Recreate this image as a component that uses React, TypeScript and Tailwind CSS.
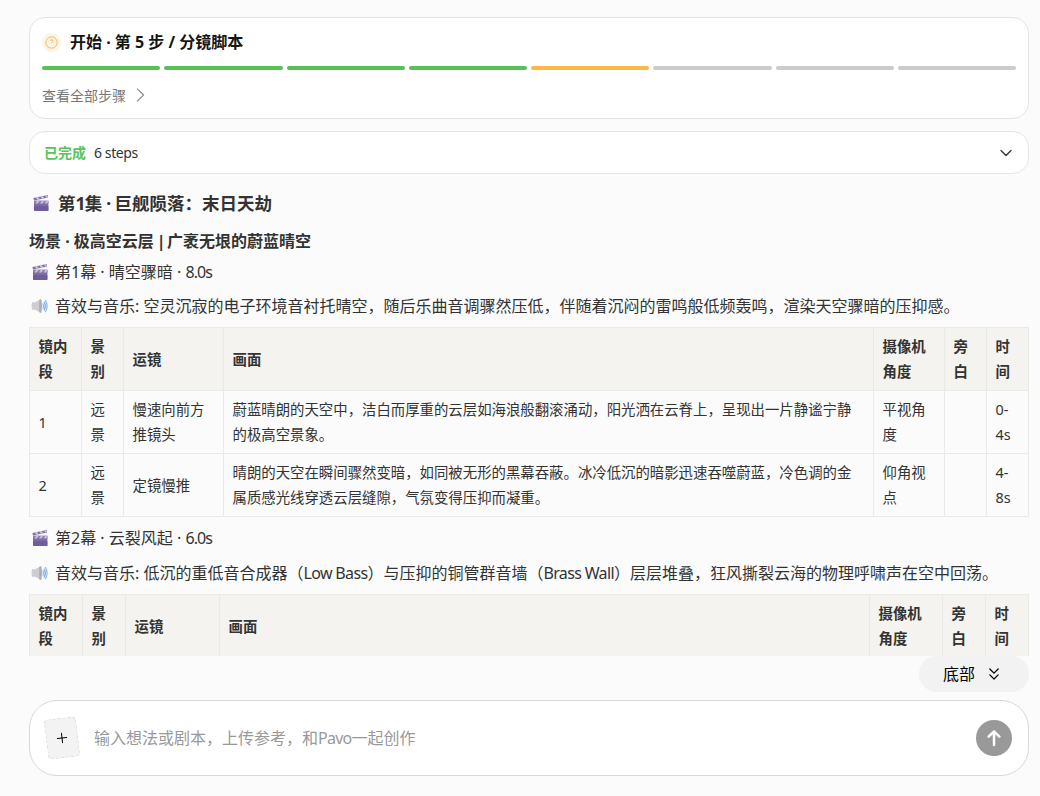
import { ChevronDown, ChevronsDown, Plus } from 'lucide-react';

const STEPS = ['done', 'done', 'done', 'done', 'active', 'todo', 'todo', 'todo'];

const STEP_COLORS: Record<string, string> = {
  done: 'bg-[#56c156]',
  active: 'bg-[#f9b949]',
  todo: 'bg-[#cbcbcb]',
};

const HEADERS = ['镜内段', '景别', '运镜', '画面', '摄像机角度', '旁白', '时间'];

const ROWS = [
  ['1', '远景', '慢速向前方推镜头', '蔚蓝晴朗的天空中，洁白而厚重的云层如海浪般翻滚涌动，阳光洒在云脊上，呈现出一片静谧宁静的极高空景象。', '平视角度', '', '0-4s'],
  ['2', '远景', '定镜慢推', '晴朗的天空在瞬间骤然变暗，如同被无形的黑幕吞蔽。冰冷低沉的暗影迅速吞噬蔚蓝，冷色调的金属质感光线穿透云层缝隙，气氛变得压抑而凝重。', '仰角视点', '', '4-8s'],
];

function ClapperIcon() {
  return (
    <svg width="18" height="18" viewBox="0 0 18 18" className="shrink-0">
      <rect x="2" y="6.8" width="14.4" height="10.2" rx="0.8" fill="#7d6ba8" />
      <rect x="2" y="12" width="14.4" height="5" rx="0.8" fill="#6f5d9b" />
      <path d="M2 6.8h14.4v2.6H2z" fill="#8f80b6" />
      <path d="M3.6 9.4l1.6-2.6h2.3L5.9 9.4zM8.2 9.4l1.6-2.6h2.3l-1.6 2.6zM12.8 9.4l1.6-2.6h2l-1.2 2.6z" fill="#c9c0de" />
      <path d="M1.4 4L15.6 1l.6 2.5L2 6.5z" fill="#8171ab" />
      <path d="M3.6 3.5l2.2-.5 2 2.3-2.3.5zM8.2 2.6l2.2-.5 2 2.2-2.3.5zM12.7 1.6l2-.4 1.4 2.2-1.4.4z" fill="#cfc7e1" />
    </svg>
  );
}

function SpeakerIcon() {
  return (
    <svg width="18" height="16" viewBox="0 0 18 16" className="shrink-0">
      <path d="M2 4.2h3.2L11 1v14l-5.8-3.2H2Q1 8 2 4.2z" fill="#cdcdd2" />
      <path d="M9.2 2Q10.9.3 11.5 2q1 6 0 12-.6 1.7-2.3 0z" fill="#adacb9" />
      <path d="M13 6q1.1 2.1 0 4.2" fill="none" stroke="#86b3e8" strokeWidth="1.2" strokeLinecap="round" />
      <path d="M14.2 4.2q2.2 3.9 0 7.8" fill="none" stroke="#72a8e6" strokeWidth="1.3" strokeLinecap="round" />
      <path d="M15.4 2.4q3.4 5.6 0 11.4" fill="none" stroke="#8bb9ec" strokeWidth="1.2" strokeLinecap="round" />
    </svg>
  );
}

function ShotTable({ cols, rows }: { cols: number[]; rows: string[][] }) {
  return (
    <table className="w-[999px] table-fixed border-collapse text-[14.4px] leading-[25px]">
      <colgroup>
        {cols.map((width, i) => (
          <col key={i} style={{ width }} />
        ))}
      </colgroup>
      <thead>
        <tr className="bg-[#f4f3ef]">
          {HEADERS.map((label) => (
            <th key={label} className="h-[63px] border border-[#e9e9e6] py-[6px] pr-2 pl-[8.5px] text-left font-bold">
              {label}
            </th>
          ))}
        </tr>
      </thead>
      <tbody>
        {rows.map((row) => (
          <tr key={row[0]}>
            {row.map((cell, i) => (
              <td key={i} className="h-[63px] border border-[#e9e9e6] py-[6px] pr-2 pl-[8.5px]">
                {cell}
              </td>
            ))}
          </tr>
        ))}
      </tbody>
    </table>
  );
}

export default function App() {
  return (
    <div className="flex h-[796px] w-[1040px] flex-col overflow-hidden bg-[#fbfbfb] pt-[17px] pr-[11px] pl-[29px] font-['Noto_Sans','Noto_Sans_CJK_SC',sans-serif] text-[#333]">
      {/* Progress */}
      <section className="h-[102px] shrink-0 rounded-2xl border border-[#e2e5e7] bg-white px-3 pt-3">
        <div className="flex h-6 items-center gap-[9px]">
          <span className="flex size-[19px] items-center justify-center rounded-full bg-[#fef4e4]">
            <svg width="13" height="13" viewBox="0 0 13 13" fill="none" stroke="#f3b65a">
              <circle cx="6.5" cy="6.5" r="5.7" />
              <path d="M5.3 4.2q1.5-1 2.6 0 .6 1.3-1.1 2.5" strokeLinecap="round" />
            </svg>
          </span>
          <h1 className="text-[16px] font-bold text-[#151515]">开始 · 第 5 步 / 分镜脚本</h1>
        </div>
        <div className="mt-3 flex gap-1">
          {STEPS.map((status, i) => (
            <span key={i} className={`h-1 flex-1 rounded-full ${STEP_COLORS[status]}`} />
          ))}
        </div>
        <button className="mt-[13px] flex h-6 items-center gap-[10px] text-[14px] text-[#777]">
          查看全部步骤
          <svg width="9" height="14" viewBox="0 0 9 14" fill="none" stroke="#888" strokeWidth="1.1">
            <path d="M1 .7L7.6 7 1 13.3" />
          </svg>
        </button>
      </section>

      {/* Completed steps */}
      <section className="mt-3 flex h-[43px] shrink-0 items-center rounded-2xl border border-[#e2e5e7] bg-white pr-3 pl-[14px] text-[14px]">
        <span className="font-bold text-[#5ac35a]">已完成</span>
        <span className="ml-2 tracking-[-0.4px]">6 steps</span>
        <ChevronDown size={20} strokeWidth={1.6} className="ml-auto" />
      </section>

      {/* Script */}
      <main className="h-[482px] shrink-0 overflow-hidden pt-[14px]">
        <h2 className="flex h-[30px] items-center gap-[8px] pl-[3px] text-[17.5px] font-bold">
          <ClapperIcon />
          <span>
            第<span className="tracking-[-0.7px]">1</span>集<span className="tracking-[-0.6px]"> · </span>巨舰陨落：末日天劫
          </span>
        </h2>
        <h3 className="mt-[10px] flex h-[26px] items-center text-[16px] font-bold">
          <span>
            场景 · 极高空云层<span className="tracking-[-1.3px]"> | </span>广袤无垠的蔚蓝晴空
          </span>
        </h3>
        <p className="mt-[5px] flex h-[26px] items-center gap-[6px] pl-[2px] text-[16px]">
          <ClapperIcon />
          <span>
            第1幕 · 晴空骤暗 · <span className="tracking-[-0.9px]">8.0s</span>
          </span>
        </p>
        <p className="mt-2 mb-2 flex h-[26px] items-center gap-[7px] pl-[1px] text-[16px]">
          <SpeakerIcon />
          <span>音效与音乐: 空灵沉寂的电子环境音衬托晴空，随后乐曲音调骤然压低，伴随着沉闷的雷鸣般低频轰鸣，渲染天空骤暗的压抑感。</span>
        </p>
        <ShotTable cols={[52, 42, 100, 650, 71, 42, 42]} rows={ROWS} />
        <p className="mt-2 flex h-[26px] items-center gap-[6px] pl-[2px] text-[16px]">
          <ClapperIcon />
          <span>
            第2幕 · 云裂风起 · <span className="tracking-[-0.9px]">6.0s</span>
          </span>
        </p>
        <p className="mt-[9px] mb-2 flex h-[26px] items-center gap-[7px] pl-[1px] text-[16px]">
          <SpeakerIcon />
          <span className="whitespace-nowrap">
            音效与音乐: 低沉的重低音合成器（<span className="tracking-[-0.65px]">Low Bass</span>）与压抑的铜管群音墙（
            <span className="tracking-[-0.65px]">Brass Wall</span>）层层堆叠，狂风撕裂云海的物理呼啸声在空中回荡。
          </span>
        </p>
        <ShotTable cols={[53, 43, 94, 650, 73, 43, 43]} rows={[]} />
      </main>

      <button className="flex h-9 w-[110px] shrink-0 items-center gap-[9px] self-end rounded-full bg-[#f2f2f2] pl-6 text-[16px] text-black">
        底部
        <ChevronsDown size={20} strokeWidth={1.5} />
      </button>

      {/* Prompt input */}
      <section className="mt-2 flex h-[76px] shrink-0 items-center rounded-[28px] border border-[#d8d8d8] bg-white pr-4 pl-4">
        <button className="flex h-10 w-8 rotate-[-7deg] items-center justify-center rounded border border-dashed border-[#dedede] bg-[#f3f3f3] text-black">
          <Plus size={16} strokeWidth={1.5} />
        </button>
        <span className="ml-4 text-[16px] text-[#999]">
          输入想法或剧本，上传参考，和<span className="tracking-[-0.75px]">Pavo</span>一起创作
        </span>
        <button className="ml-auto flex size-9 items-center justify-center rounded-full bg-[#999] text-white">
          <svg width="16" height="18" viewBox="0 0 16 18" fill="none" stroke="currentColor" strokeWidth="2.5" strokeLinecap="round" strokeLinejoin="round">
            <path d="M8 16V2.5M2.6 7.7L8 2.3l5.4 5.4" />
          </svg>
        </button>
      </section>
    </div>
  );
}
